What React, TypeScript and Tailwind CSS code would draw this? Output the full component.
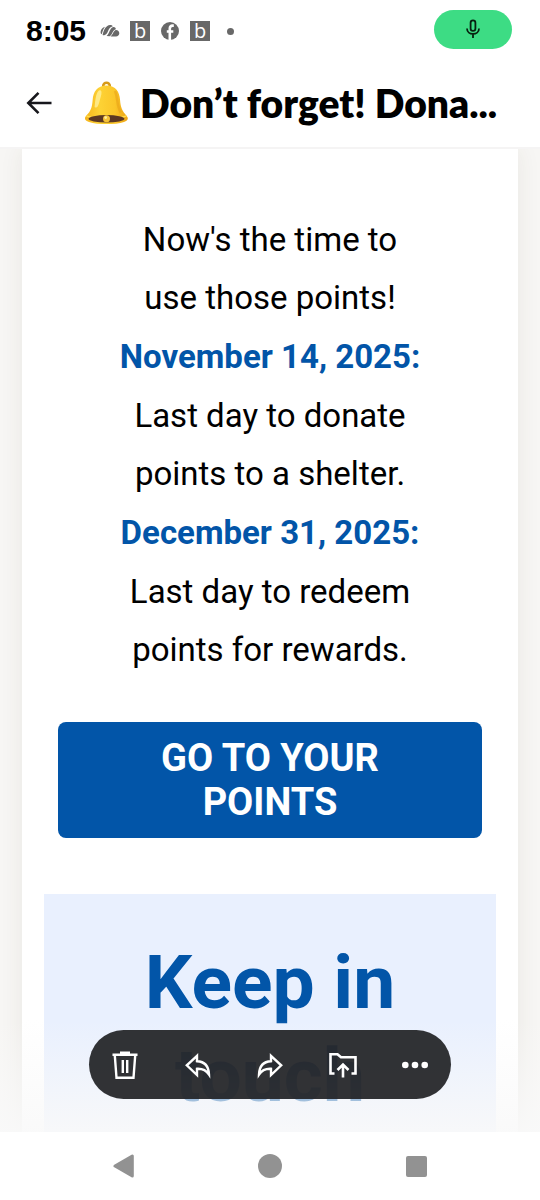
import React from 'react'

interface IconButtonProps {
    label: string
    children: React.ReactNode
    className?: string
}

const IconButton: React.FC<IconButtonProps> = ({ label, children, className = '' }) => (
    <button type="button" aria-label={label} className={`flex items-center justify-center ${className}`}>
        {children}
    </button>
)

const CloudIcon = () => (
    <svg className="w-5 h-5" viewBox="0 0 20 20" fill="#686868" aria-hidden="true">
        <path d="M.8 12.600C.2 9.200 2 6.500 5 5.700 3.600 7.400 2.500 10.200 1.800 13.200Z" />
        <path d="M2.600 14C3.700 8.500 6 4.400 10 4c1.300 0 2.300.500 2.900 1.200C9.300 6.200 8.500 9 7.400 11.600 6.600 13.500 4.800 14.700 2.600 14Z" />
        <path d="M6.600 15C9.600 13.200 9.400 6.800 13.400 6.100 15 6 16 7.200 15.800 8.300 12.600 9 12 14.600 9.600 15.200Z" />
        <path d="M10.500 15.400c2.400-1.200 3-5.900 5.500-6.300 2 .200 3.300 1.700 3.300 3.200 0 1.900-1.500 3.100-3.300 3.100Z" />
    </svg>
)

const LetterBadge = () => (
    <span className="flex items-center justify-center w-5 h-5 bg-[#686868] text-white text-[20px] leading-5 font-['Open_Sans',sans-serif]">b</span>
)

const FacebookIcon = () => (
    <svg className="w-5 h-5" viewBox="0 0 20 20" aria-hidden="true">
        <circle cx="10" cy="10" r="9" fill="#686868" />
        <path d="M9.800 19.500v-12q0-2.900 2.700-2.900h1.300M6.800 10.500h6.500" fill="none" stroke="#fff" strokeWidth="2.600" />
    </svg>
)

const BellIcon = () => (
    <svg className="w-11 h-11 shrink-0" viewBox="0 0 44 44" aria-hidden="true">
        <defs>
            <linearGradient id="bell" x1="0" x2="1">
                <stop offset="0" stopColor="#f6b51c" />
                <stop offset=".35" stopColor="#fdd235" />
                <stop offset=".7" stopColor="#fbc629" />
                <stop offset="1" stopColor="#eda415" />
            </linearGradient>
        </defs>
        <circle cx="22.500" cy="5" r="3.300" fill="none" stroke="#d79a17" strokeWidth="2.600" />
        <path d="M22.500 4.500C13 4.500 9.300 11 8.700 18.500 8 27 6.800 30 2.200 34.800 -.4 37.600 1.200 39.700 5 40.900c9 2.900 26 2.900 35 0 3.600-1.200 5-3.200 2.700-6-4.500-5-6-8-6.700-16.400C35.400 11 32 4.500 22.500 4.500Z" fill="url(#bell)" />
        <path d="M2.500 34.800c7 3 33 3 40 0" fill="none" stroke="#ffdd50" strokeWidth="1.400" />
        <ellipse cx="22.500" cy="37.800" rx="18" ry="3.700" fill="#5b3723" />
        <path d="M14 10.500c-2.600 4-2.700 10-3.400 15.500 2 1.800 3.600-.500 4.600-4.500 1-4 2.500-8 2.300-10.500-.3-2-2.200-2.200-3.500-.500Z" fill="#fff2a0" opacity=".75" />
        <path d="M31 10c3 7 1.500 15 5.800 21.500" fill="none" stroke="#e8a217" strokeWidth="2.400" opacity=".55" />
        <circle cx="22.500" cy="37.800" r="3.500" fill="#f4c137" />
        <circle cx="21.700" cy="36.600" r="1.300" fill="#fff0a3" />
    </svg>
)

const StatusBar = () => (
    <div className="flex items-center justify-between h-[62px] pl-[26px] pr-7 shrink-0">
        <div className="flex items-center">
            <span className="text-[30px] leading-9 font-bold font-['Liberation_Sans',sans-serif]">8:05</span>
            <div className="flex items-center gap-[10px] ml-[14px]">
                <CloudIcon />
                <LetterBadge />
                <FacebookIcon />
                <LetterBadge />
                <span className="w-[7px] h-[7px] ml-[7px] rounded-full bg-[#686868]" />
            </div>
        </div>
        <div className="flex items-center justify-center w-[78px] h-[39px] mb-1 rounded-full bg-[#3ddc84]">
            <svg className="w-5 h-5" viewBox="0 0 20 20" fill="none" stroke="#07210f" strokeWidth="1.800" aria-hidden="true">
                <rect x="7.600" y="1.400" width="4.800" height="10.500" rx="2.400" />
                <path d="M4 9.500c0 7.200 12 7.200 12 0M10 15v4" />
            </svg>
        </div>
    </div>
)

const Header = () => (
    <header className="flex items-center h-[87px] pl-[26px] pr-6 pb-1 border-b-2 border-[#f5f4f4] shrink-0">
        <IconButton label="Back" className="shrink-0">
            <svg className="w-[26px] h-[26px]" viewBox="0 0 26 26" fill="none" stroke="#17171c" strokeWidth="2.600" aria-hidden="true">
                <path d="M25.500 13H2M12.500 2.800 2.300 13l10.200 10.200" />
            </svg>
        </IconButton>
        <div className="flex items-center gap-3 ml-8 min-w-0">
            <BellIcon />
            <h1 className="text-[39px] leading-[48px] font-extrabold whitespace-nowrap font-['Lato',sans-serif]">Don’t forget! Dona...</h1>
        </div>
    </header>
)

const DateLine: React.FC<{ children: React.ReactNode }> = ({ children }) => (
    <strong className="font-bold text-[#0255a8]">{children}</strong>
)

const Message = () => (
    <article className="mx-[22px] px-[22px] pt-[62px] bg-white text-center shadow-[0_0_22px_rgba(80,60,40,0.08)]">
        <div className="flex flex-col gap-px text-[33px] leading-[58px]">
            <p>Now's the time to<br />use those points!</p>
            <DateLine>November 14, 2025:</DateLine>
            <p>Last day to donate<br />points to a shelter.</p>
            <DateLine>December 31, 2025:</DateLine>
            <p>Last day to redeem<br />points for rewards.</p>
        </div>
        <a href="#points" className="block mx-[14px] mt-[43px] py-[14px] rounded-lg bg-[#0255a8] text-white text-[38px] leading-[44px] font-bold">
            GO TO YOUR<br />POINTS
        </a>
        <section className="mt-14 pt-[42px] pb-20 bg-[#e9f0fe]">
            <h2 className="text-[75px] leading-[93px] font-bold text-[#0255a8]">Keep in<br />touch</h2>
        </section>
    </article>
)

const Toolbar = () => (
    <div role="toolbar" aria-label="Message actions" className="absolute inset-x-[89px] bottom-[33px] flex items-center justify-between h-[69px] px-[22px] rounded-full bg-[#242528]/94 text-white">
        <IconButton label="Delete">
            <svg className="w-7 h-7" viewBox="0 0 28 28" fill="none" stroke="currentColor" strokeWidth="2.400" aria-hidden="true">
                <path d="M1.500 3.800h25M3.800 4.500 5.500 26.800h17l1.700-22.300M11.800 9v13M16.200 9v13" />
                <path d="M9 2h10" strokeWidth="3" />
            </svg>
        </IconButton>
        <IconButton label="Reply">
            <svg className="w-7 h-7" viewBox="0 0 28 28" fill="none" stroke="currentColor" strokeWidth="2.400" aria-hidden="true">
                <path d="M13 4.800 2.800 14.300 13 24v-6.200c5-.3 9 1.200 12 5.700-.3-8-4.500-13-12-13.300Z" />
            </svg>
        </IconButton>
        <IconButton label="Forward">
            <svg className="w-7 h-7" viewBox="0 0 28 28" fill="none" stroke="currentColor" strokeWidth="2.400" aria-hidden="true">
                <path d="M15 4.800 25.200 14.300 15 24v-6.200c-5-.3-9 1.200-12 5.700.3-8 4.500-13 12-13.300Z" />
            </svg>
        </IconButton>
        <IconButton label="Move to folder">
            <svg className="w-7 h-7" viewBox="0 0 28 28" fill="none" stroke="currentColor" strokeWidth="2.600" aria-hidden="true">
                <path d="M5.500 22.500H1.500V3.200h7l3.500 3h14.500v16.300h-4" />
                <path d="M14 26.500V14M8.500 19 14 13.500l5.500 5.500" />
            </svg>
        </IconButton>
        <IconButton label="More">
            <svg className="w-7 h-7" viewBox="0 0 28 28" fill="currentColor" aria-hidden="true">
                <circle cx="4.300" cy="14" r="3.300" />
                <circle cx="14" cy="14" r="3.300" />
                <circle cx="23.700" cy="14" r="3.300" />
            </svg>
        </IconButton>
    </div>
)

const NavigationBar = () => (
    <nav className="flex items-center justify-between h-[68px] px-[112px] shrink-0">
        <IconButton label="System back">
            <svg className="w-6 h-6" viewBox="0 0 24 24" fill="#929292" stroke="#929292" strokeWidth="3" strokeLinejoin="round" aria-hidden="true">
                <path d="M3 12 20.300 2v20Z" />
            </svg>
        </IconButton>
        <IconButton label="Home">
            <span className="w-6 h-6 rounded-full bg-[#929292]" />
        </IconButton>
        <IconButton label="Recent apps" className="w-6">
            <span className="w-[21px] h-[21px] rounded-xs bg-[#929292]" />
        </IconButton>
    </nav>
)

export default function App() {
    return (
        <div className="flex flex-col h-screen overflow-hidden bg-white text-black font-['Roboto',sans-serif]">
            <StatusBar />
            <Header />
            <div className="relative flex-1 min-h-0">
                <main className="h-full overflow-hidden bg-[#f7f6f4]">
                    <Message />
                </main>
                <div className="absolute inset-x-0 bottom-0 h-28 bg-linear-to-b from-[#f9f9f9]/0 to-[#f9f9f9]/90 pointer-events-none" />
                <Toolbar />
            </div>
            <NavigationBar />
        </div>
    )
}
